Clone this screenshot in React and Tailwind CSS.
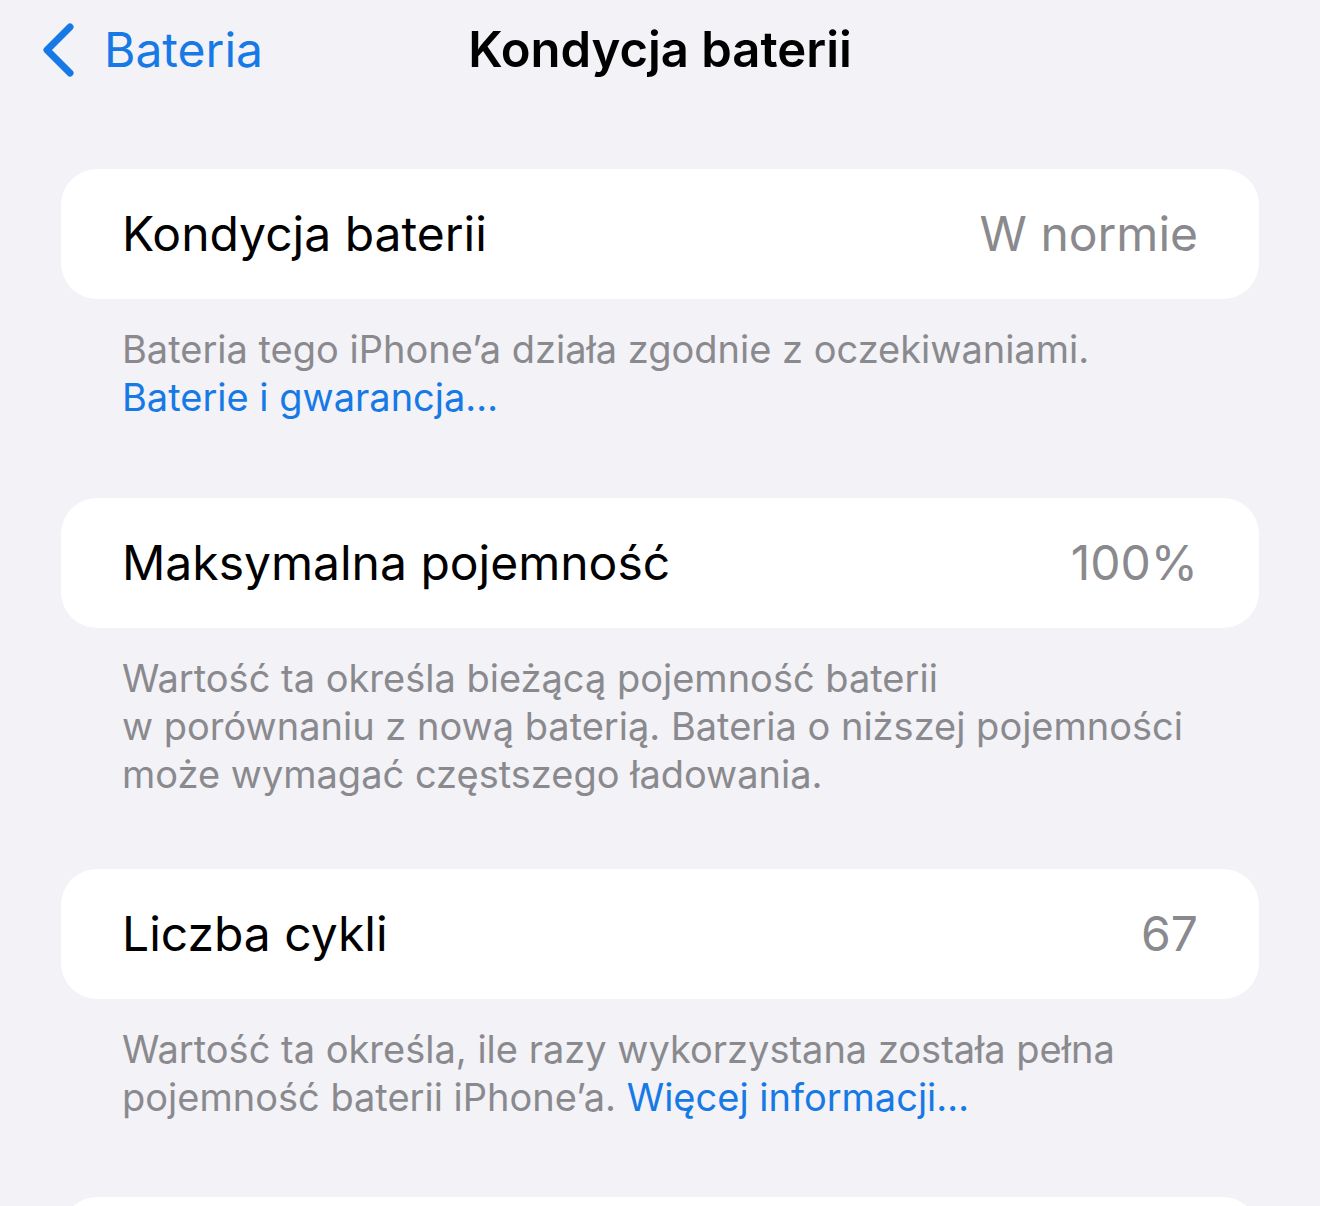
import React from "react";

const rows = [
    {
        label: "Kondycja baterii",
        value: "W normie",
        gap: "pb-[77px]",
        footer: (
            <>
                Bateria tego iPhone’a działa zgodnie z oczekiwaniami.
                <br />
                <span className="text-[#1679e6]">Baterie i gwarancja…</span>
            </>
        ),
    },
    {
        label: "Maksymalna pojemność",
        value: "100%",
        gap: "pb-[71px]",
        footer: (
            <>
                Wartość ta określa bieżącą pojemność baterii
                <br />
                w porównaniu z nową baterią. Bateria o niższej pojemności
                <br />
                może wymagać częstszego ładowania.
            </>
        ),
    },
    {
        label: "Liczba cykli",
        value: "67",
        gap: "pb-[76px]",
        footer: (
            <>
                Wartość ta określa, ile razy wykorzystana została pełna
                <br />
                pojemność baterii iPhone’a.{" "}
                <span className="text-[#1679e6]">Więcej informacji…</span>
            </>
        ),
    },
];

export default function App() {
    return (
        <div
            className="h-[1206px] overflow-hidden bg-[#f2f2f7] antialiased"
            style={{ fontFamily: "Inter, 'Noto Sans', sans-serif" }}
        >
            <div className="relative flex h-[100px] items-center">
                <button className="flex items-center gap-[30px] pl-[40px] text-[48px] text-[#1679e6]">
                    <svg width="34" height="56" viewBox="0 0 34 56" fill="none">
                        <path
                            d="M30 5 L7 28 L30 51"
                            stroke="#1679e6"
                            strokeWidth="7"
                            strokeLinecap="round"
                            strokeLinejoin="round"
                        />
                    </svg>
                    Bateria
                </button>
                <h1 className="absolute left-1/2 -translate-x-1/2 text-[49px] font-semibold text-black">
                    Kondycja baterii
                </h1>
            </div>

            <div className="px-[61px] pt-[69px]">
                {rows.map((row) => (
                    <div key={row.label}>
                        <div className="flex h-[130px] items-center justify-between rounded-[36px] bg-white px-[61px]">
                            <span className="text-[48px] text-black">{row.label}</span>
                            <span className="text-[48px] text-[#8a8a8e]">{row.value}</span>
                        </div>
                        <p className={`px-[61px] pt-[26px] text-[38px] leading-[48px] text-[#8a8a8e] ${row.gap}`}>
                            {row.footer}
                        </p>
                    </div>
                ))}
                <div className="h-[130px] rounded-[36px] bg-white" />
            </div>
        </div>
    );
}
